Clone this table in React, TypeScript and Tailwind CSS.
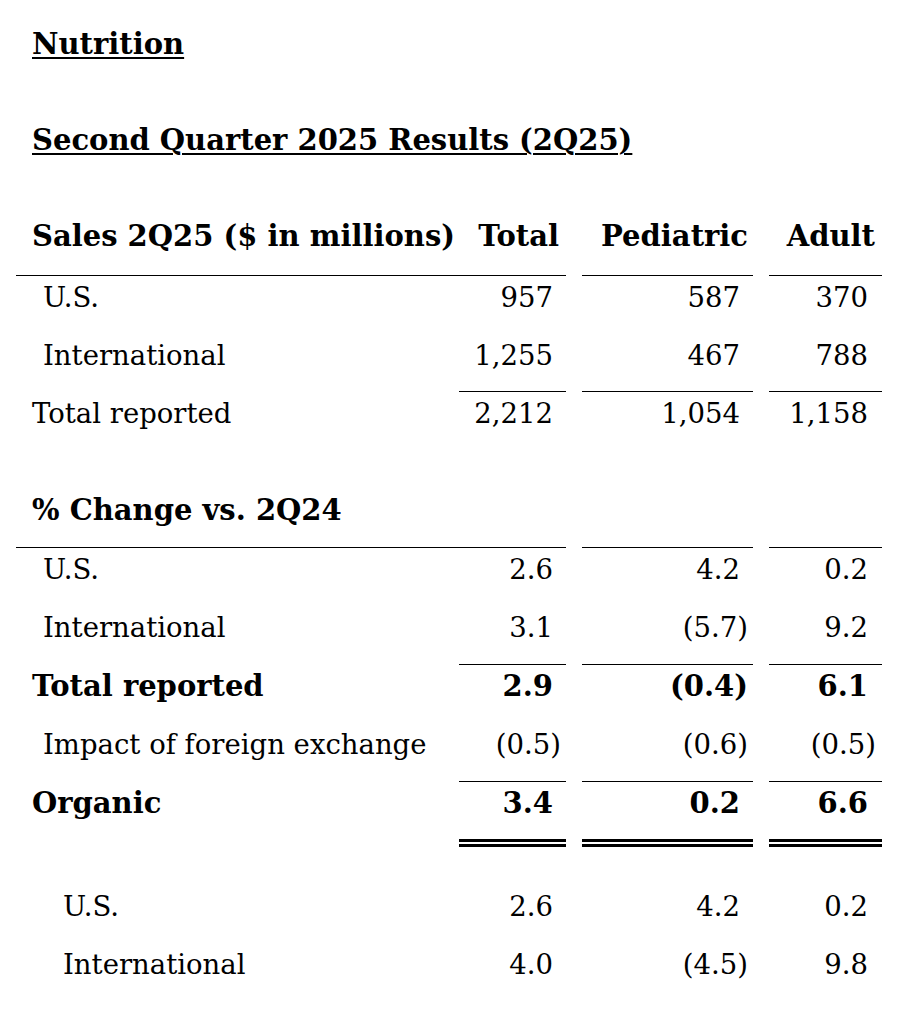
const COLS = 'grid grid-cols-[443px_107px_16px_171px_16px_113px]';
const BOLD = 'font-bold text-[29px]';

type RowProps = {
  label: string;
  vals?: string[];
  bold?: boolean;
  indent?: string;
  pad?: string;
  labelRule?: string;
  numRule?: string;
};

// values that end in ")" let the paren hang past the column's number edge
function Num({ v }: { v: string }) {
  if (!v.endsWith(')')) return <>{v}</>;
  return (
    <>
      {v.slice(0, -1)}
      <span className="-mr-[8px]">)</span>
    </>
  );
}

function Row({ label, vals, bold, indent = 'pl-4', pad = 'pt-1 pb-5', labelRule = '', numRule = '' }: RowProps) {
  const weight = bold ? BOLD : 'font-normal';
  return (
    <div className={COLS}>
      <div className={`${pad} ${indent} ${labelRule} ${weight} whitespace-nowrap`}>{label}</div>
      {vals ? (
        <>
          <div className={`${pad} ${numRule} pr-[13px] text-right ${weight}`}>
            <Num v={vals[0]} />
          </div>
          <div />
          <div className={`${pad} ${numRule} pr-[13px] text-right ${weight}`}>
            <Num v={vals[1]} />
          </div>
          <div />
          <div className={`${pad} ${numRule} pr-[14px] text-right ${weight}`}>
            <Num v={vals[2]} />
          </div>
        </>
      ) : (
        <>
          <div className={`${pad} ${numRule}`} />
          <div />
          <div className={`${pad} ${numRule}`} />
          <div />
          <div className={`${pad} ${numRule}`} />
        </>
      )}
    </div>
  );
}

export default function App() {
  return (
    <div className="min-h-[1028px] bg-white pl-4 pt-[27px] font-['DejaVu_Serif',serif] text-[27.5px] leading-[34px] text-black">
      <div className={`pl-4 ${BOLD} underline decoration-2 underline-offset-[3px]`}>Nutrition</div>
      <div className={`mt-[62px] pl-4 ${BOLD} underline decoration-2 underline-offset-[3px]`}>
        Second Quarter 2025 Results (2Q25)
      </div>

      <div className="mt-[62px] w-[866px]">
        {/* header */}
        <div className={COLS}>
          <div className={`border-b border-black pb-[22px] pl-4 ${BOLD} whitespace-nowrap`}>Sales 2Q25 ($ in millions)</div>
          <div className={`border-b border-black pb-[22px] pr-[7px] text-right ${BOLD}`}>Total</div>
          <div />
          <div className={`border-b border-black pb-[22px] pr-[5px] text-right ${BOLD}`}>Pediatric</div>
          <div />
          <div className={`border-b border-black pb-[22px] pr-[7px] text-right ${BOLD}`}>Adult</div>
        </div>

        <Row label="U.S." indent="pl-[27px]" vals={['957', '587', '370']} />
        <Row label="International" indent="pl-[27px]" pad="pt-1 pb-[19px]" vals={['1,255', '467', '788']} />
        <Row
          label="Total reported"
          vals={['2,212', '1,054', '1,158']}
          pad="pt-1 pb-[21px]"
          labelRule="border-t border-transparent"
          numRule="border-t border-black"
        />

        <Row
          label="% Change vs. 2Q24"
          bold
          pad="pt-[42px] pb-[20px]"
          labelRule="border-b border-black"
          numRule="border-b border-black"
        />
        <Row label="U.S." indent="pl-[27px]" vals={['2.6', '4.2', '0.2']} />
        <Row label="International" indent="pl-[27px]" vals={['3.1', '(5.7)', '9.2']} />
        <Row
          label="Total reported"
          bold
          vals={['2.9', '(0.4)', '6.1']}
          labelRule="border-t border-transparent"
          numRule="border-t border-black"
        />
        <Row label="Impact of foreign exchange" indent="pl-[27px]" vals={['(0.5)', '(0.6)', '(0.5)']} />
        <Row
          label="Organic"
          bold
          vals={['3.4', '0.2', '6.6']}
          pad="pt-1 pb-[19px]"
          labelRule="border-t border-b-[8px] border-transparent"
          numRule="border-t border-b-[8px] border-black [border-bottom-style:double]"
        />

        <Row label="U.S." indent="pl-[47px]" pad="pt-[42px] pb-[24px]" vals={['2.6', '4.2', '0.2']} />
        <Row label="International" indent="pl-[47px]" pad="pt-0 pb-5" vals={['4.0', '(4.5)', '9.8']} />
      </div>
    </div>
  );
}
